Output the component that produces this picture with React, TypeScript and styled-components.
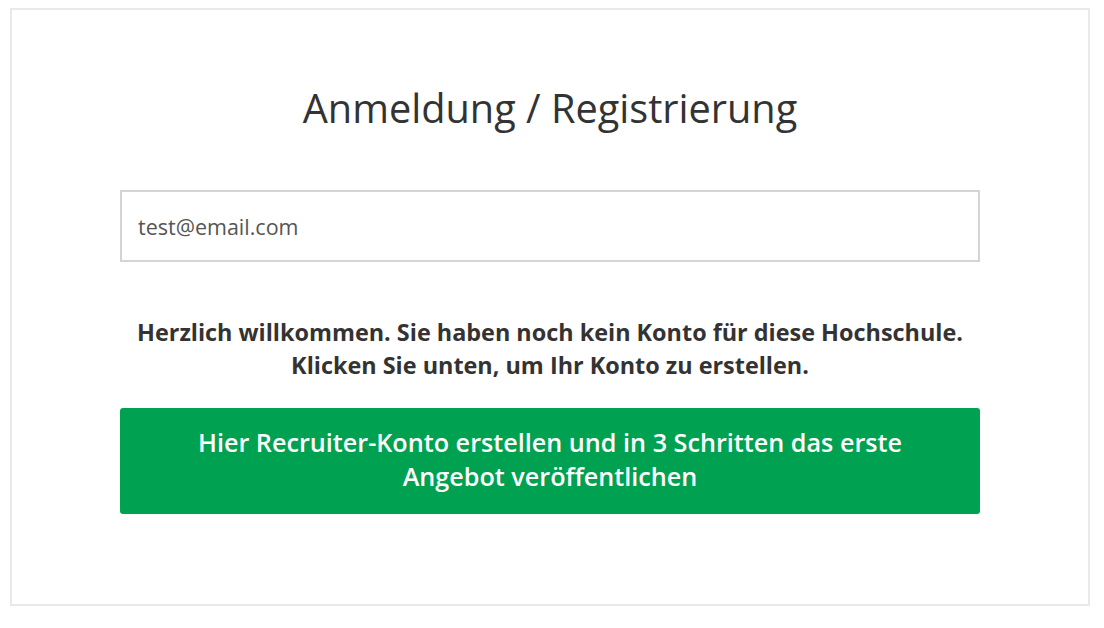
import styled, { createGlobalStyle } from 'styled-components'

const GlobalStyle = createGlobalStyle`
    body {
        margin: 0;
        padding: 8px 14px 0 10px;
        background: #fff;
        font-family: 'Open Sans', 'Liberation Sans', sans-serif;
        color: #333;
    }
`

const Card = styled.div`
    box-sizing: border-box;
    width: 1080px;
    height: 598px;
    border: 2px solid #e9e9e9;
    display: flex;
    flex-direction: column;
    align-items: center;
    padding-top: 72px;
`

const Title = styled.h1`
    margin: 0;
    font-size: 39.7px;
    font-weight: 400;
    line-height: 52px;
    color: #333;
`

const EmailInput = styled.input`
    box-sizing: border-box;
    width: 860px;
    height: 72px;
    margin-top: 56px;
    padding: 0 16px;
    border: 2px solid #d4d4d4;
    border-radius: 0;
    font-family: inherit;
    font-size: 21.5px;
    color: #555;
    outline: none;
`

const Welcome = styled.p`
    margin: 54px 0 0;
    text-align: center;
    font-size: 23.4px;
    font-weight: 700;
    line-height: 33px;
    color: #333;
`

const CreateButton = styled.button`
    box-sizing: border-box;
    width: 860px;
    height: 106px;
    margin-top: 26px;
    padding: 0 60px 4px;
    border: none;
    border-radius: 3px;
    background: #00a251;
    color: #fff;
    font-family: inherit;
    font-size: 25.2px;
    font-weight: 600;
    line-height: 34px;
    cursor: pointer;
`

const App = () => {
    return (
        <>
            <GlobalStyle />
            <Card>
                <Title>Anmeldung / Registrierung</Title>
                <EmailInput type='email' defaultValue='test@email.com' />
                <Welcome>
                    Herzlich willkommen. Sie haben noch kein Konto für diese Hochschule.
                    <br />
                    Klicken Sie unten, um Ihr Konto zu erstellen.
                </Welcome>
                <CreateButton>
                    Hier Recruiter-Konto erstellen und in 3 Schritten das erste Angebot veröffentlichen
                </CreateButton>
            </Card>
        </>
    )
}

export default App
